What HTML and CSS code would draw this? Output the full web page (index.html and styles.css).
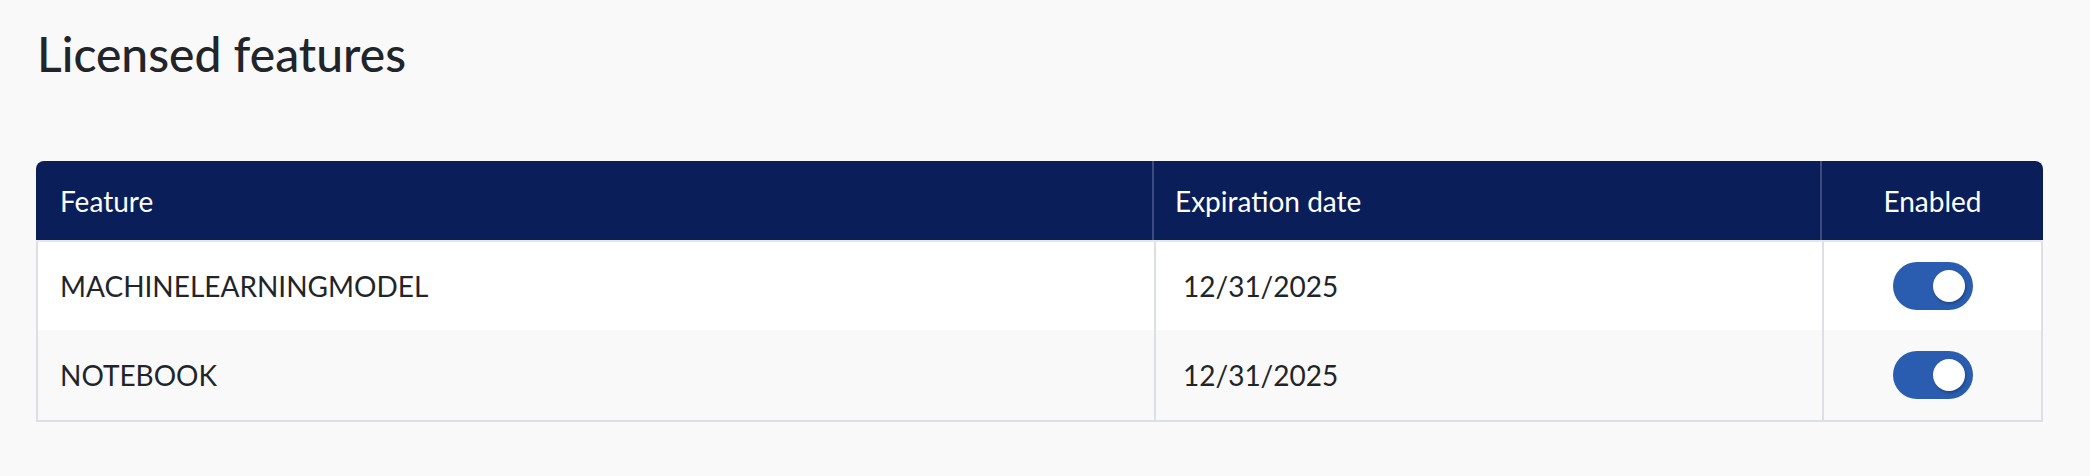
FILE: index.html
```html
<!DOCTYPE html>
<html lang="en">
<head>
<meta charset="utf-8">
<title>Licensed features</title>
<link rel="stylesheet" href="styles.css">
</head>
<body>
<main class="page">
  <h1 class="title">Licensed features</h1>
  <div class="table">
    <div class="row head">
      <div class="cell">Feature</div>
      <div class="cell">Expiration date</div>
      <div class="cell center">Enabled</div>
    </div>
    <div class="row body odd">
      <div class="cell">MACHINELEARNINGMODEL</div>
      <div class="cell date">12/31/2025</div>
      <div class="cell center"><span class="toggle on"><span class="knob"></span></span></div>
    </div>
    <div class="row body even">
      <div class="cell">NOTEBOOK</div>
      <div class="cell date">12/31/2025</div>
      <div class="cell center"><span class="toggle on"><span class="knob"></span></span></div>
    </div>
  </div>
</main>
</body>
</html>
```

FILE: styles.css
```css
* { box-sizing: border-box; }
html, body {
  margin: 0;
  background: #f9f9f9;
}
body {
  font-family: Lato, "Open Sans", "Liberation Sans", sans-serif;
  color: #212529;
}
.page {
  padding: 0 47px 0 36px;
}
.title {
  margin: 0;
  padding-top: 24px;
  padding-left: 1px;
  font-size: 48px;
  font-weight: 500;
  line-height: 60px;
  color: #212529;
  height: 161px;
}
.table {
  display: flex;
  flex-direction: column;
  border-radius: 8px 8px 0 0;
  overflow: hidden;
}
.row {
  display: grid;
  grid-template-columns: 1116px 668px 1fr;
}
.cell {
  display: flex;
  align-items: center;
  padding-left: 24px;
  font-size: 28px;
}
.cell.center {
  justify-content: center;
  padding-left: 0;
}
.head {
  height: 81px;
  background: #0a1e5a;
  color: #ffffff;
  border-bottom: 2px solid #e4e7eb;
}
.head .cell + .cell {
  border-left: 2px solid #3a4b82;
  padding-left: 21px;
}
.head .cell.center { padding-left: 0; }
.body {
  border-left: 2px solid #dcdfe3;
  border-right: 2px solid #dcdfe3;
}
.body .cell:first-child { padding-left: 22px; }
.body .cell + .cell {
  border-left: 2px solid #dcdfe3;
}
.body.odd { background: #ffffff; height: 88px; }
.body.even { background: #f9f9f9; border-bottom: 2px solid #dcdfe3; height: 92px; }
.cell.date { padding-left: 27px; }
.toggle {
  display: flex;
  justify-content: flex-end;
  align-items: center;
  width: 80px;
  height: 48px;
  padding: 0 8px;
  border-radius: 24px;
  background: #2a5db0;
}
.knob {
  width: 32px;
  height: 32px;
  border-radius: 50%;
  background: #ffffff;
  box-shadow: 1px 2px 3px rgba(0, 0, 0, 0.25);
}
```
